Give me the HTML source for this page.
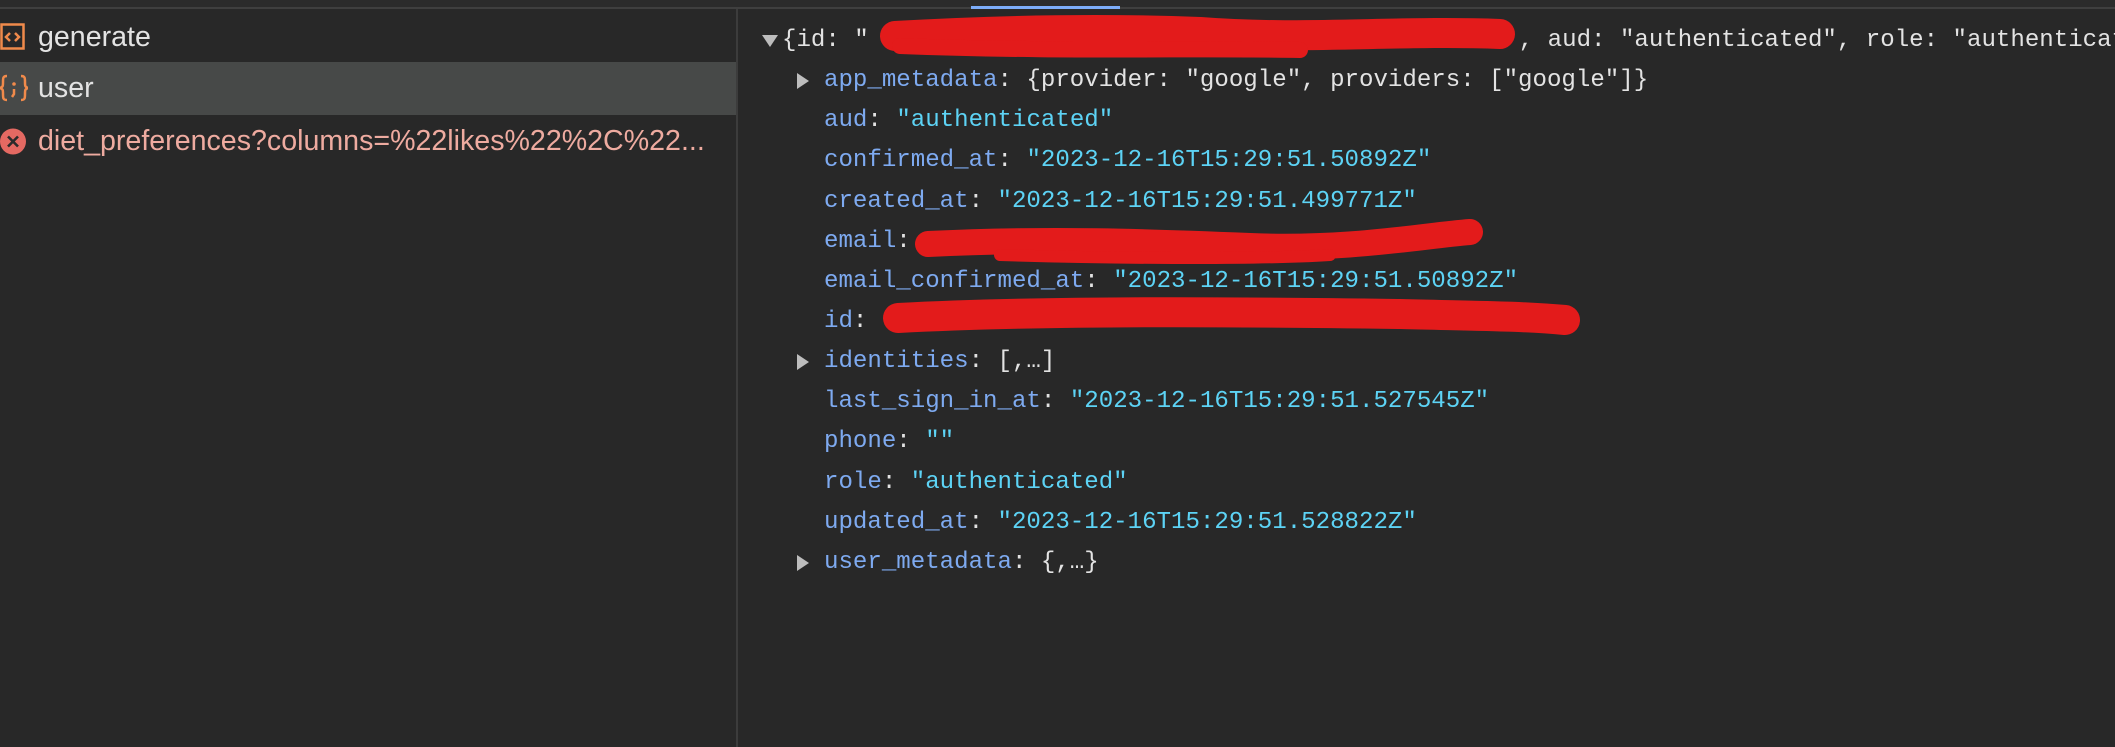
<!DOCTYPE html>
<html><head><meta charset="utf-8"><style>
*{margin:0;padding:0;box-sizing:border-box}
html,body{width:2115px;height:747px;overflow:hidden}
body{background:#282828;position:relative;font-family:"Liberation Sans",sans-serif}
.top{position:absolute;left:0;top:0;width:2115px;height:9px;background:#2b2b2b;border-bottom:2px solid #3f3f3f}
.tab{position:absolute;left:971px;top:6px;width:149px;height:3px;background:#7cacf8}
.div{position:absolute;left:736px;top:9px;width:2px;height:738px;background:#3c3c3c}
.row{position:absolute;left:0;width:736px;height:53px;line-height:53px;font-size:28.6px;color:#e3e3e3;padding-left:38px;white-space:nowrap}
.sel{background:#474948}
.err{color:#eeaba0}
.ic{position:absolute;left:0}
.code{position:absolute;left:0;top:21px;width:2115px;font-family:"Liberation Mono",monospace;font-size:24.1px;line-height:40.15px;color:#e3e3e3;white-space:nowrap}
.l{position:relative;height:40.15px}
.l>span{white-space:pre}
.k{color:#7eaaf0}.s{color:#5dd3f5}
.tri{position:absolute;width:0;height:0}
.td{border-left:8px solid transparent;border-right:8px solid transparent;border-top:12px solid #bdbdbd;left:762px;top:35px}
.tr{border-top:8px solid transparent;border-bottom:8px solid transparent;border-left:12px solid #bdbdbd;left:797px;top:12px}
</style></head><body>
<div class="top"></div><div class="tab"></div><div class="div"></div>

<div class="row" style="top:11px">generate
<svg class="ic" style="top:12px" width="26" height="28" viewBox="0 0 26 28"><rect x="1.5" y="1.5" width="22" height="24" fill="none" stroke="#f08a4b" stroke-width="2.5"/><path d="M10 10l-4 4 4 4M15 10l4 4-4 4" fill="none" stroke="#f08a4b" stroke-width="2.5"/></svg></div>
<div class="row sel" style="top:62px">user
<svg class="ic" style="top:12px" width="28" height="30" viewBox="0 0 28 30"><path d="M7 2c-4 0-4 2-4 6s0 5-3 6c3 1 3 2 3 6s0 6 4 6M21 2c4 0 4 2 4 6s0 5 3 6c-3 1-3 2-3 6s0 6-4 6" fill="none" stroke="#f08a4b" stroke-width="2.5"/><circle cx="14" cy="10" r="1.8" fill="#f08a4b"/><path d="M14 15v5l-2 3" stroke="#f08a4b" stroke-width="2.5" fill="none"/></svg></div>
<div class="row err" style="top:115px">diet_preferences?columns=%22likes%22%2C%22...
<svg class="ic" style="top:13px" width="27" height="27" viewBox="0 0 27 27"><circle cx="13" cy="13.5" r="13" fill="#e46962"/><path d="M8 8.5l10 10M18 8.5l-10 10" stroke="#2a2a2a" stroke-width="2.6"/></svg></div>

<div class="tri td"></div>
<div class="code"><div class="l"><span style="position:absolute;left:782px">{id: "<span style="display:inline-block;width:650px"></span>, aud: "authenticated", role: "authenticated"}</span></div><div class="l"><div class="tri tr"></div><span style="position:absolute;left:824px"><span class="k">app_metadata</span>: {provider: "google", providers: ["google"]}</span></div><div class="l"><span style="position:absolute;left:824px"><span class="k">aud</span>: <span class="s">"authenticated"</span></span></div><div class="l"><span style="position:absolute;left:824px"><span class="k">confirmed_at</span>: <span class="s">"2023-12-16T15:29:51.50892Z"</span></span></div><div class="l"><span style="position:absolute;left:824px"><span class="k">created_at</span>: <span class="s">"2023-12-16T15:29:51.499771Z"</span></span></div><div class="l"><span style="position:absolute;left:824px"><span class="k">email</span>:</span></div><div class="l"><span style="position:absolute;left:824px"><span class="k">email_confirmed_at</span>: <span class="s">"2023-12-16T15:29:51.50892Z"</span></span></div><div class="l"><span style="position:absolute;left:824px"><span class="k">id</span>:</span></div><div class="l"><div class="tri tr"></div><span style="position:absolute;left:824px"><span class="k">identities</span>: [,…]</span></div><div class="l"><span style="position:absolute;left:824px"><span class="k">last_sign_in_at</span>: <span class="s">"2023-12-16T15:29:51.527545Z"</span></span></div><div class="l"><span style="position:absolute;left:824px"><span class="k">phone</span>: <span class="s">""</span></span></div><div class="l"><span style="position:absolute;left:824px"><span class="k">role</span>: <span class="s">"authenticated"</span></span></div><div class="l"><span style="position:absolute;left:824px"><span class="k">updated_at</span>: <span class="s">"2023-12-16T15:29:51.528822Z"</span></span></div><div class="l"><div class="tri tr"></div><span style="position:absolute;left:824px"><span class="k">user_metadata</span>: {,…}</span></div></div>

<svg style="position:absolute;left:0;top:0" width="2115" height="747">
<g fill="none" stroke="#e31b1b" stroke-linecap="round" stroke-linejoin="round">
<path d="M895 36 C1000 30 1100 28 1200 32 C1300 40 1400 30 1500 34" stroke-width="30"/>
<path d="M900 46 C1050 52 1200 48 1300 50" stroke-width="16"/>
<path d="M928 244 C1050 238 1150 242 1250 246 C1350 250 1420 236 1470 232" stroke-width="26"/>
<path d="M1000 255 C1100 258 1250 260 1330 255" stroke-width="12"/>
<path d="M898 318 C1050 310 1250 312 1400 314 C1480 316 1520 316 1565 320" stroke-width="30"/>
</g></svg>
</body></html>
